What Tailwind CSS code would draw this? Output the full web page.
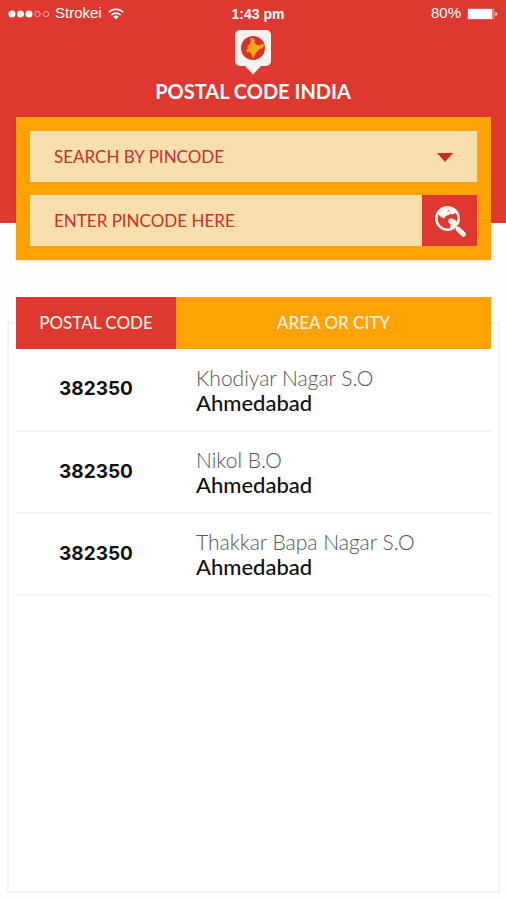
<!DOCTYPE html>
<html lang="en">
  <head>
    <meta charset="UTF-8" />
    <meta name="viewport" content="width=device-width, initial-scale=1.0" />
    <title>Postal Code India</title>
    <script src="https://cdn.jsdelivr.net/npm/@tailwindcss/browser@4"></script>
  </head>
  <body class="flex min-h-screen flex-col bg-[#fefefe] font-['Lato',sans-serif]">
    <header class="bg-[#de3831] pb-[118px] text-white">
      <!-- Status bar -->
      <div class="grid h-[27px] grid-cols-3 items-center px-2 font-['Liberation_Sans',sans-serif] text-[15px]">
        <div class="flex items-center gap-[6px]">
          <svg class="h-2 w-[41px]" viewBox="0 0 41 8" fill="none" stroke="#fff">
            <circle cx="4" cy="4" r="3.5" fill="#fff" stroke="none" />
            <circle cx="12.5" cy="4" r="3.5" fill="#fff" stroke="none" />
            <circle cx="21" cy="4" r="3.5" fill="#fff" stroke="none" />
            <circle cx="29.5" cy="4" r="2.7" stroke-opacity=".55" />
            <circle cx="38" cy="4" r="2.7" stroke-opacity=".55" />
          </svg>
          <span>Strokei</span>
          <svg class="h-3 w-4" viewBox="0 0 16 12" fill="none" stroke="#fff" stroke-width="1.6">
            <path d="M.8 4.200a10.300 10.300 0 0 1 14.400 0M3.400 7a6.600 6.600 0 0 1 9.200 0" />
            <path d="M8 11.400 5.300 8.700a3.900 3.900 0 0 1 5.400 0z" fill="#fff" stroke="none" />
          </svg>
        </div>
        <span class="pl-[10px] text-center text-sm font-bold">1:43 pm</span>
        <div class="flex items-center justify-end gap-[6px]">
          <span>80%</span>
          <svg class="h-3 w-[31px]" viewBox="0 0 31 12">
            <rect x=".5" y=".5" width="27" height="11" rx="1.2" fill="#fff" fill-opacity=".35" />
            <rect x="1" y="1" width="24" height="10" fill="#fff" />
            <path d="M28.300 4c1.400.4 2 1.100 2 2s-.6 1.600-2 2z" fill="#fff" fill-opacity=".8" />
          </svg>
        </div>
      </div>

      <!-- Logo -->
      <div class="flex flex-col items-center pt-[3px]">
        <svg class="h-[45px] w-9" viewBox="0 0 36 45">
          <path d="M5 0h26a5 5 0 0 1 5 5v26a5 5 0 0 1-5 5h-5l-8 8.500L10 36H5a5 5 0 0 1-5-5V5a5 5 0 0 1 5-5z" fill="#f7f2ec" />
          <circle cx="18" cy="18" r="12" fill="#d7312b" />
          <path d="M15 8.500l3-.5 2 2.200-.6 2.800 2.600 2 2 .6 3.800-2 1.400 1.700-2.200 3.500-2.500.2-1 1.500-2.300 2-1.600 3.300-1.400 2.800-1.500-2.800-1.500-4-2.800.6-1.700-2.400 2.600-1.400-1.100-2.300 2.800-2.300 1-2.700z" fill="#fba51b" />
        </svg>
        <h1 class="mt-0.5 text-xl leading-7 font-bold">POSTAL CODE INDIA</h1>
      </div>
    </header>

    <!-- Search form -->
    <form id="search-form" class="mr-[15px] ml-4 -mt-[106px] flex flex-col gap-[13px] bg-[#ffa305] p-[14px] text-[17px] text-[#c9302a] shadow">
      <div class="relative">
        <select
          id="search-type"
          name="type"
          aria-label="Search by"
          class="block h-[51px] w-full appearance-none bg-[#f9dfae] px-6 outline-none"
        >
          <option>SEARCH BY PINCODE</option>
        </select>
        <svg class="pointer-events-none absolute top-[22px] right-6 h-[9px] w-4" viewBox="0 0 16 9">
          <path d="M0 0h16L8 9z" fill="#cf2a27" />
        </svg>
      </div>
      <div class="flex">
        <input
          id="pincode"
          name="pincode"
          type="text"
          aria-label="Pincode"
          placeholder="ENTER PINCODE HERE"
          class="h-[51px] min-w-0 flex-1 bg-[#f9dfae] px-6 outline-none placeholder:text-[#c9302a]"
        />
        <button type="submit" aria-label="Search" class="flex w-[55px] items-center justify-center bg-[#de3831]">
          <svg class="h-8 w-8" viewBox="0 0 32 32">
            <circle cx="13.5" cy="13.5" r="11.2" fill="none" stroke="#fdf3ee" stroke-width="2.6" />
            <path d="M4 9.500 8 4.500l5-2.200 5 .9-.8 2.500-2.700-.6-1.200 1.400 2.700 1.400-1 2.100-2.900.8-1.800 2.700-2.700-1.100z" fill="#fdf3ee" />
            <path d="M14 6l3.500-3 4.500 3.500-1.500 2.300-3 .6-2.200-1z" fill="#fdf3ee" />
            <path d="M14.500 14.500l2.500-1.300 3.500 1.300 2.500 2-1.500 4-3.800 3.300-1.500-.6.300-3.700-2-2z" fill="#fdf3ee" />
            <path d="M24.300 24.300l5 5" stroke="#fdf3ee" stroke-width="5" stroke-linecap="round" />
            <path d="M21.500 21.500l2 2" stroke="#fdf3ee" stroke-width="2" />
          </svg>
        </button>
      </div>
    </form>

    <!-- Results -->
    <main class="mt-[62px] mr-[6px] mb-[7px] ml-[7px] flex-1 border-2 border-[#f3f3f3] bg-white">
      <table class="mx-[7px] -mt-[27px] w-[calc(100%-14px)] table-fixed border-collapse">
        <thead>
          <tr class="h-[52px] text-[17px] text-[#fff0e4]">
            <th class="w-40 bg-[#de3831] font-medium">POSTAL CODE</th>
            <th class="bg-[#ffa305] font-medium">AREA OR CITY</th>
          </tr>
        </thead>
        <tbody>
          <tr class="h-[82px] border-b-2 border-[#f3f3f3]">
            <td class="text-center font-['Inter',sans-serif] text-[19px] font-bold text-[#111]">382350</td>
            <td class="pl-5 text-[21px] leading-[25px]">
              <p class="font-light text-[#555]">Khodiyar Nagar S.O</p>
              <p class="text-[22px] font-medium text-[#111]">Ahmedabad</p>
            </td>
          </tr>
          <tr class="h-[82px] border-b-2 border-[#f3f3f3]">
            <td class="text-center font-['Inter',sans-serif] text-[19px] font-bold text-[#111]">382350</td>
            <td class="pl-5 text-[21px] leading-[25px]">
              <p class="font-light text-[#555]">Nikol B.O</p>
              <p class="text-[22px] font-medium text-[#111]">Ahmedabad</p>
            </td>
          </tr>
          <tr class="h-[82px] border-b-2 border-[#f3f3f3]">
            <td class="text-center font-['Inter',sans-serif] text-[19px] font-bold text-[#111]">382350</td>
            <td class="pl-5 text-[21px] leading-[25px]">
              <p class="font-light text-[#555]">Thakkar Bapa Nagar S.O</p>
              <p class="text-[22px] font-medium text-[#111]">Ahmedabad</p>
            </td>
          </tr>
        </tbody>
      </table>
    </main>

    <script type="text/javascript">
      document.addEventListener("DOMContentLoaded", function () {
        var searchForm = document.getElementById("search-form");

        searchForm.addEventListener("submit", function (event) {
          event.preventDefault();
        });
      });
    </script>
  </body>
</html>
